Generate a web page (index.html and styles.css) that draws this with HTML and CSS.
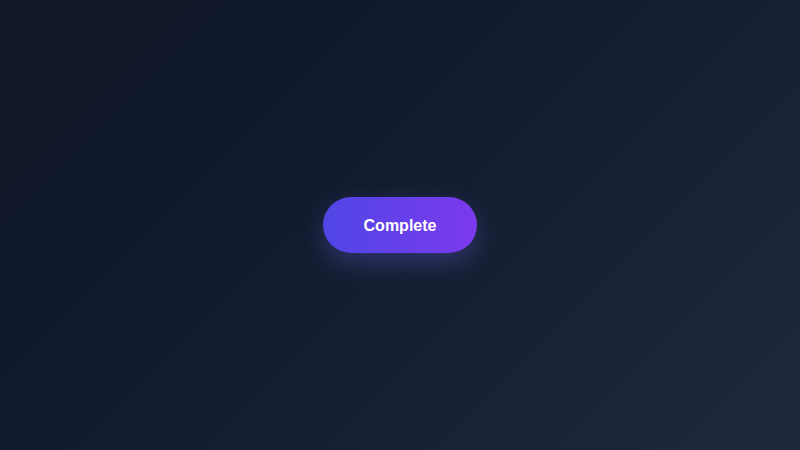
FILE: index.html
```html
<!DOCTYPE html>
<html lang="en">
<head>
<meta charset="utf-8">
<title>Complete</title>
<link rel="stylesheet" href="styles.css">
</head>
<body>
<main class="stage">
  <button class="btn" type="button">Complete</button>
</main>
</body>
</html>
```
FILE: styles.css
```css
html, body {
  margin: 0;
  height: 100%;
}
body {
  background: linear-gradient(135deg, #111827 0%, #0f172a 20%, #1e293b 100%);
  font-family: "Liberation Sans", Arial, sans-serif;
}
.stage {
  height: 450px;
  display: flex;
  align-items: center;
  justify-content: center;
}
.btn {
  border: 0;
  border-radius: 28px;
  height: 56px;
  width: 154px;
  padding: 2px 0 0;
  background: linear-gradient(90deg, #4f46e5, #7c3aed);
  color: #fff;
  font-family: "Liberation Sans", Arial, sans-serif;
  font-weight: 700;
  font-size: 16px;
  box-shadow: 0 10px 25px rgba(99, 102, 241, 0.3);
  cursor: pointer;
}
```
